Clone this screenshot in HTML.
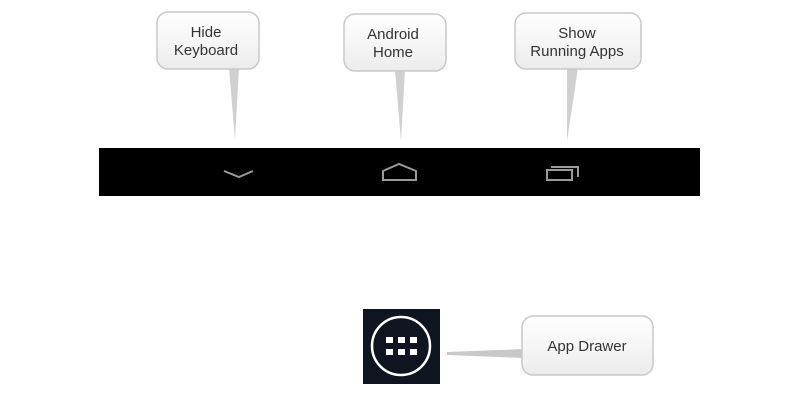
<!DOCTYPE html>
<html><head><style>body{margin:0;background:#fff;width:800px;height:401px;overflow:hidden}svg{display:block}</style></head><body>
<svg width="800" height="401" viewBox="0 0 800 401" xmlns="http://www.w3.org/2000/svg">
<defs>
<linearGradient id="g" x1="0" y1="0" x2="0" y2="1"><stop offset="0" stop-color="#ffffff"/><stop offset="1" stop-color="#ececec"/></linearGradient>
</defs>
<g stroke="#c8c8c8" stroke-width="1.5" fill="url(#g)">
<polygon points="229,68 239,68 235,140" fill="#d0d0d0" stroke="none"/>
<rect x="157" y="12" width="102" height="57" rx="11"/>
<polygon points="395,70 405,70 401,141" fill="#d0d0d0" stroke="none"/>
<rect x="344" y="14" width="102" height="57" rx="11"/>
<polygon points="567,68 578,68 567,141" fill="#d0d0d0" stroke="none"/>
<rect x="515" y="13" width="126" height="56" rx="11"/>
<polygon points="447,352 447,355 524,358 524,349" fill="#c8c8c8" stroke="none"/>
<rect x="522" y="316" width="131" height="59" rx="11"/>
</g>
<g font-family="Liberation Sans, sans-serif" font-size="15" fill="#333" text-anchor="middle">
<text x="206" y="37">Hide</text><text x="206" y="55">Keyboard</text>
<text x="393" y="39">Android</text><text x="393" y="57">Home</text>
<text x="577" y="38">Show</text><text x="577" y="56">Running Apps</text>
<text x="587" y="351">App Drawer</text>
</g>
<rect x="99" y="148" width="601" height="48" fill="#000"/>
<g stroke="#9a9a9a" stroke-width="2" fill="none">
<polyline points="224,171 239,177 253,171"/>
<polygon points="383,180 383,171 399,164 416,171 416,180"/>
<rect x="547" y="170" width="25" height="10"/>
<polyline points="551,167 578,167 578,177"/>
</g>
<rect x="363" y="309" width="77" height="75" fill="#0e1520"/>
<circle cx="401" cy="346" r="29" fill="none" stroke="#fff" stroke-width="2.5"/>
<g fill="#fff">
<rect x="386" y="337" width="7" height="6"/><rect x="398" y="337" width="7" height="6"/><rect x="410" y="337" width="7" height="6"/>
<rect x="386" y="349" width="7" height="6"/><rect x="398" y="349" width="7" height="6"/><rect x="410" y="349" width="7" height="6"/>
</g>
</svg>
</body></html>
